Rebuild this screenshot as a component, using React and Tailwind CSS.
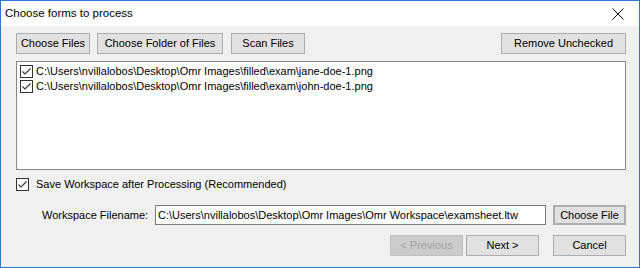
import React from 'react';

const FONT = { fontFamily: '"Liberation Sans", Arial, sans-serif' };
const FILES = [
  'C:\\Users\\nvillalobos\\Desktop\\Omr Images\\filled\\exam\\jane-doe-1.png',
  'C:\\Users\\nvillalobos\\Desktop\\Omr Images\\filled\\exam\\john-doe-1.png',
];

function Check() {
  return (
    <span className="w-[13px] h-[13px] border border-[#333] bg-white flex items-center justify-center shrink-0">
      <svg width="11" height="11" viewBox="0 0 11 11">
        <path d="M1.5 5.5 L4 8 L9.5 2.5" fill="none" stroke="#333" strokeWidth="1.1" />
      </svg>
    </span>
  );
}

function Btn({ children, className = '', disabled, focused }) {
  return (
    <button
      className={`h-[21px] flex items-center justify-center whitespace-nowrap text-[11px] ${
        focused ? 'border-2 border-[#0078d7]' : 'border'
      } ${disabled ? 'text-[#a0a0a0] bg-[#cccccc] border-[#bfbfbf]' : 'text-black bg-[#e1e1e1] border-[#adadad]'} ${className}`}
    >
      {children}
    </button>
  );
}

export default function App() {
  return (
    <div className="w-[640px] h-[268px] border border-[#2b79d0] bg-[#f0f0f0] flex flex-col text-[11px] text-black whitespace-nowrap" style={FONT}>
      <div className="h-[25px] bg-white flex items-center justify-between pl-[4px] pr-[15px]">
        <span className="text-[11.5px]">Choose forms to process</span>
        <svg width="12" height="12" viewBox="0 0 12 12">
          <path d="M0.5 0.5 L11.5 11.5 M11.5 0.5 L0.5 11.5" stroke="#111" strokeWidth="1" />
        </svg>
      </div>
      <div className="flex-1 pl-[15px] pr-[13px] pt-[7px]">
        <div className="flex items-center">
          <Btn className="w-[74px]">Choose Files</Btn>
          <Btn className="w-[126px] ml-[7px]">Choose Folder of Files</Btn>
          <Btn className="w-[74px] ml-[8px]">Scan Files</Btn>
          <Btn className="w-[125px] ml-auto">Remove Unchecked</Btn>
        </div>
        <div className="mt-[7px] h-[109px] bg-white border border-[#828790] pt-[2px] pl-[3px]">
          {FILES.map(f => (
            <div key={f} className="h-[15px] flex items-center gap-[3px]">
              <Check />
              <span>{f}</span>
            </div>
          ))}
        </div>
        <div className="mt-[8px] flex items-center gap-[7px] h-[13px]">
          <Check />
          <span>Save Workspace after Processing (Recommended)</span>
        </div>
        <div className="mt-[14px] flex items-center h-[20px]">
          <span className="ml-[26px] w-[113px]">Workspace Filename:</span>
          <div className="w-[391px] h-[20px] bg-white border border-[#7a7a7a] flex items-center pl-[2px]">
            C:\Users\nvillalobos\Desktop\Omr Images\Omr Workspace\examsheet.ltw
          </div>
          <Btn className="w-[73px] ml-auto !h-[20px]" focused>Choose File</Btn>
        </div>
        <div className="mt-[10px] flex items-center">
          <Btn className="w-[73px] ml-auto" disabled>&lt; Previous</Btn>
          <Btn className="w-[73px] ml-[3px]">Next &gt;</Btn>
          <Btn className="w-[73px] ml-[14px]">Cancel</Btn>
        </div>
      </div>
    </div>
  );
}
